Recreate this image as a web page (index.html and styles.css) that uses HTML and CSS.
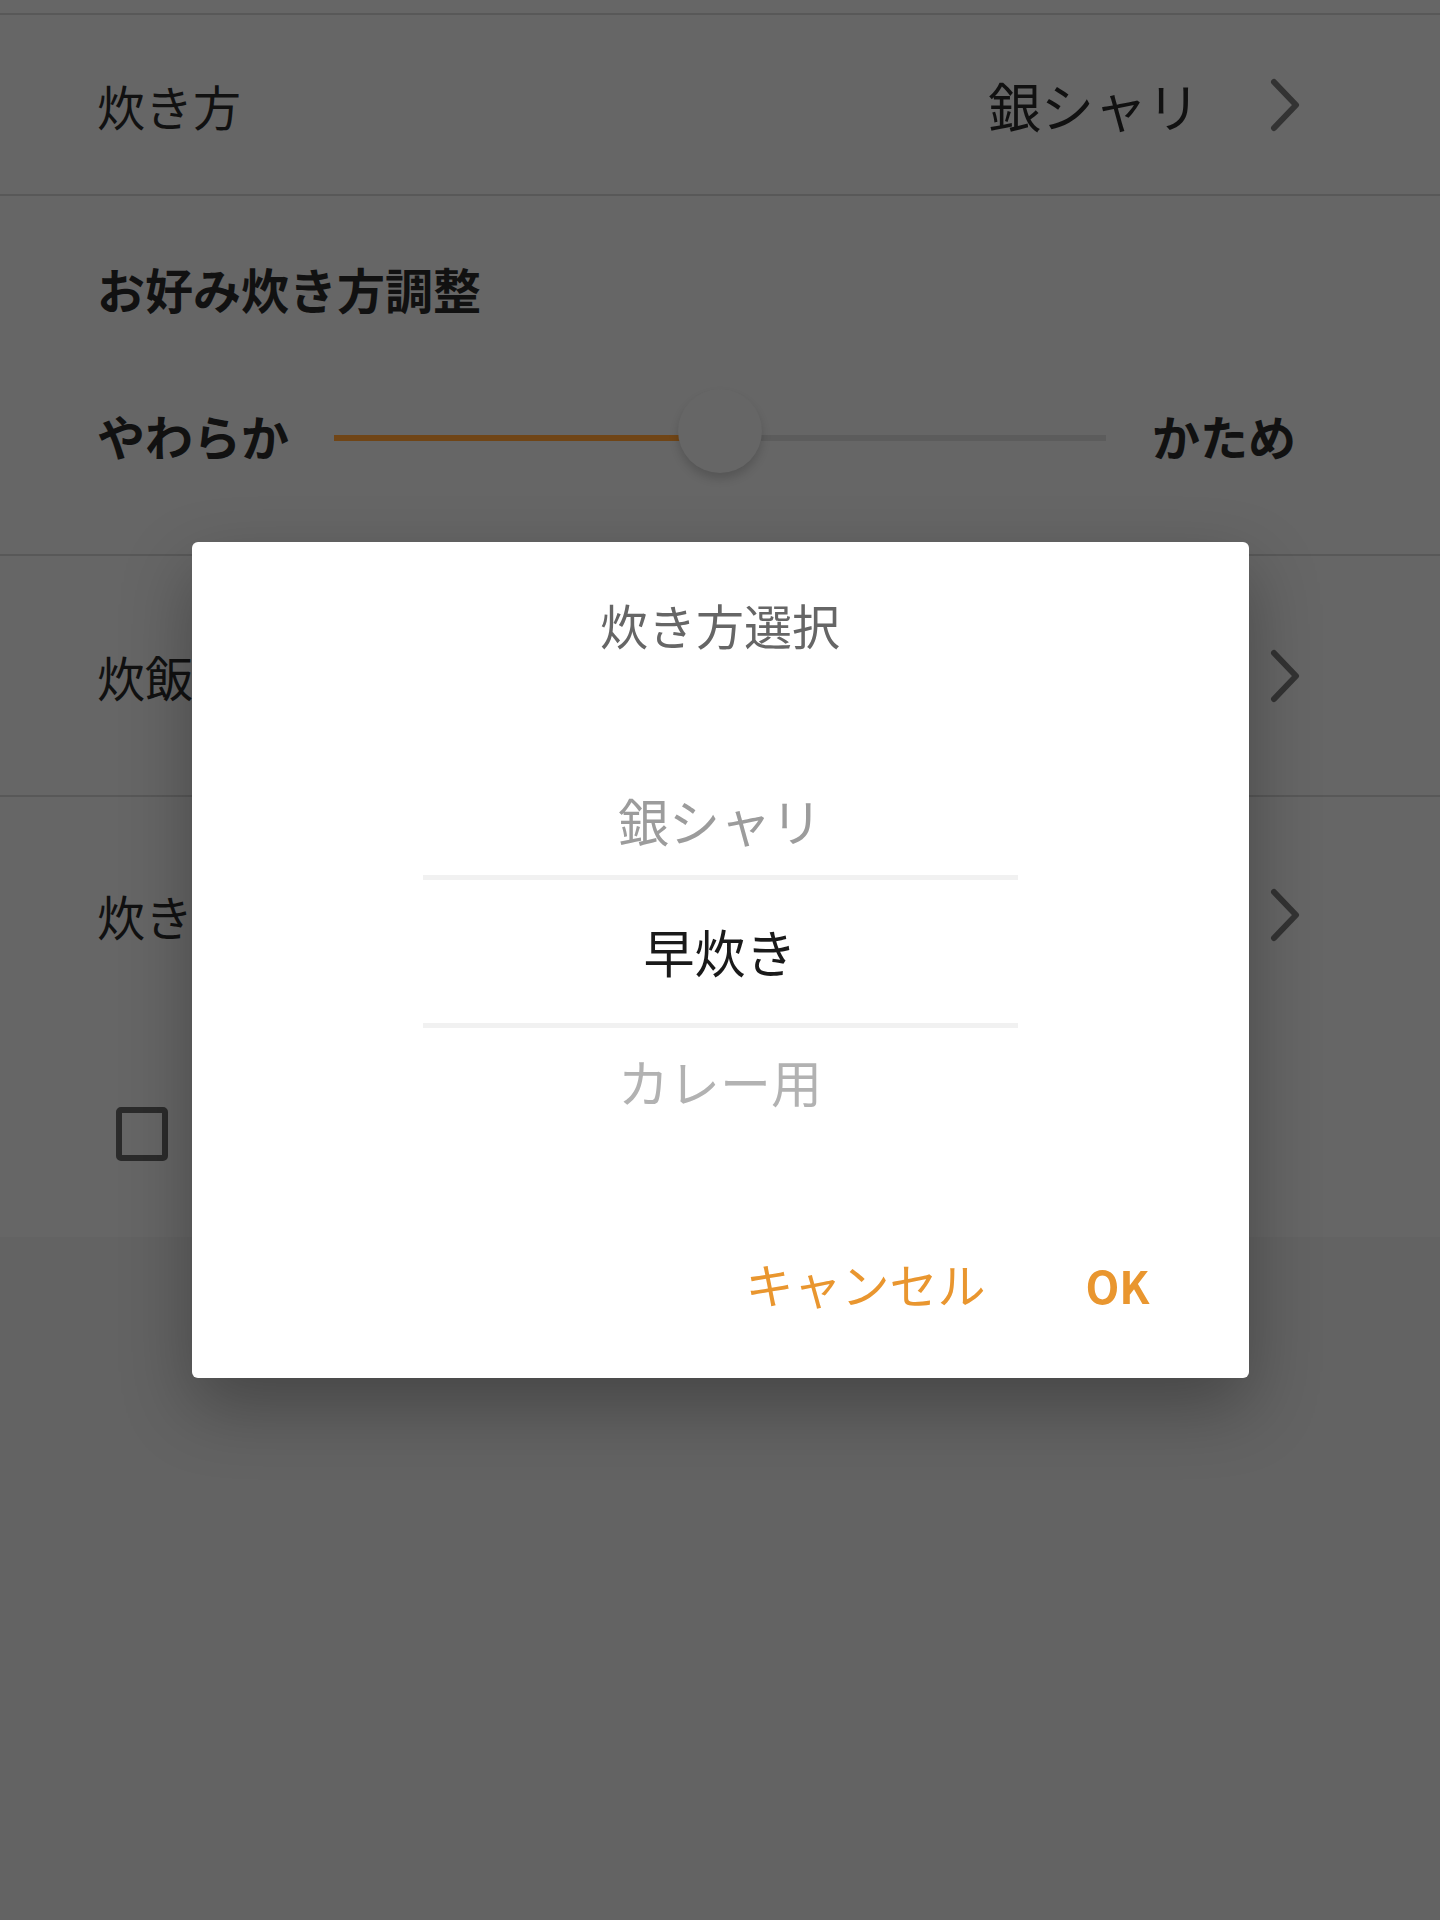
FILE: index.html
```html
<!DOCTYPE html>
<html>
	<head>
		<meta charset="UTF-8">
		<title>炊き方設定</title>
		<link rel="stylesheet" href="styles.css">
	</head>
	<body>
	  <div class="screen">
	    <div class="cut"></div>
	    <div class="row">
	      <div class="label">炊き方</div>
	      <div class="value">銀シャリ</div>
	      <svg class="chev" width="30" height="54" viewBox="0 0 30 54"><polyline points="4,4 26,27 4,50" fill="none" stroke="#333" stroke-width="6" stroke-linecap="round" stroke-linejoin="round"/></svg>
	    </div>
	    <div class="section">
	      <div class="sec-title">お好み炊き方調整</div>
	      <div class="slider">
	        <div class="s-label">やわらか</div>
	        <div class="track">
	          <div class="fill" style="width: 50%"></div>
	          <div class="thumb" style="left: 50%"></div>
	        </div>
	        <div class="s-label">かため</div>
	      </div>
	    </div>
	    <div class="row r3">
	      <div class="label">炊飯量設定</div>
	      <div class="value">3合</div>
	      <svg class="chev" width="30" height="54" viewBox="0 0 30 54"><polyline points="4,4 26,27 4,50" fill="none" stroke="#333" stroke-width="6" stroke-linecap="round" stroke-linejoin="round"/></svg>
	    </div>
	    <div class="row r4">
	      <div class="label">炊き上がり時刻</div>
	      <div class="value">7:00</div>
	      <svg class="chev" width="30" height="54" viewBox="0 0 30 54"><polyline points="4,4 26,27 4,50" fill="none" stroke="#333" stroke-width="6" stroke-linecap="round" stroke-linejoin="round"/></svg>
	    </div>
	    <div class="check-row">
	      <div class="checkbox"></div>
	      <div class="label">毎日この設定で炊く</div>
	    </div>
	  </div>

	  <div class="mask">
	    <div class="dialog">
	      <div class="d-title">炊き方選択</div>
	      <div class="picker">
	        <div class="item prev">銀シャリ</div>
	        <div class="sep"></div>
	        <div class="item cur">早炊き</div>
	        <div class="sep"></div>
	        <div class="item next">カレー用</div>
	      </div>
	      <div class="actions">
	        <div class="btn">キャンセル</div>
	        <div class="btn ok">OK</div>
	      </div>
	    </div>
	  </div>
	</body>
</html>
```

FILE: styles.css
```css
html,body{
  padding: 0;
  margin: 0;
  overflow: hidden;
}
body {
  background-color: #636363;
  font-family: "Noto Sans CJK JP", "Noto Sans", sans-serif;
  color: #111;
  height: 1920px;
}
.screen {
  background-color: #666;
  height: 1237px;
}
.cut {
  height: 13px;
}
.row {
  display: flex;
  align-items: center;
  border-top: solid 2px #585858;
  height: 181px;
  padding: 0 140px 0 97px;
  box-sizing: border-box;
  font-size: 48px;
  line-height: 72px;
}
.r3 {
  height: 241px;
}
.r4 {
  height: 238px;
}
.label {
  flex-grow: 1;
  white-space: nowrap;
}
.value {
  font-size: 53px;
  margin-right: 70px;
}
.chev {
  display: block;
}
.section {
  border-top: solid 2px #585858;
  height: 360px;
  box-sizing: border-box;
  padding: 56px 144px 0 97px;
}
.sec-title {
  font-size: 48px;
  line-height: 72px;
  font-weight: bold;
}
.slider {
  display: flex;
  align-items: center;
  height: 84px;
  margin-top: 64px;
}
.s-label {
  font-size: 48px;
  font-weight: bold;
  line-height: 72px;
  padding-top: 10px;
}
.track {
  flex-grow: 1;
  position: relative;
  height: 6px;
  margin: 16px 46px 0 45px;
  background-color: #5c5c5c;
}
.fill {
  height: 100%;
  background-color: #704516;
}
.thumb {
  position: absolute;
  top: -46px;
  width: 84px;
  height: 84px;
  margin-left: -42px;
  border-radius: 50%;
  background-color: #666;
  box-shadow: 0 6px 10px rgba(0,0,0,0.16);
}
.check-row {
  display: flex;
  align-items: center;
  height: 202px;
  padding: 0 0 0 116px;
  font-size: 48px;
}
.checkbox {
  width: 40px;
  height: 42px;
  border: solid 6px #2b2b2b;
  border-radius: 5px;
  margin-right: 40px;
}
.mask {
  position: fixed;
  top: 0;
  left: 0;
  width: 100%;
  height: 1920px;
  display: flex;
  align-items: center;
  justify-content: center;
}
.dialog {
  width: 1057px;
  height: 836px;
  box-sizing: border-box;
  background-color: #fff;
  border-radius: 6px;
  box-shadow: 0 28px 70px rgba(0,0,0,0.3);
  padding: 46px 0 0 0;
}
.d-title {
  text-align: center;
  font-size: 48px;
  line-height: 72px;
  color: #666;
}
.picker {
  width: 595px;
  margin: 124px auto 0 auto;
  text-align: center;
  font-size: 51px;
  line-height: 72px;
}
.item.prev {
  color: #9c9c9c;
  margin-bottom: 19px;
}
.sep {
  height: 5px;
  background-color: #f1f1f1;
}
.item.cur {
  color: #1a1a1a;
  height: 143px;
  line-height: 143px;
  padding-bottom: 2px;
  box-sizing: border-box;
}
.item.next {
  color: #b2b2b2;
  margin-top: 17px;
}
.actions {
  display: flex;
  justify-content: flex-end;
  align-items: baseline;
  margin-top: 130px;
  padding-right: 99px;
}
.btn {
  font-size: 48px;
  line-height: 72px;
  color: #e9962f;
  margin-left: 100px;
}
.ok {
  font-size: 44px;
  font-weight: bold;
}
```
